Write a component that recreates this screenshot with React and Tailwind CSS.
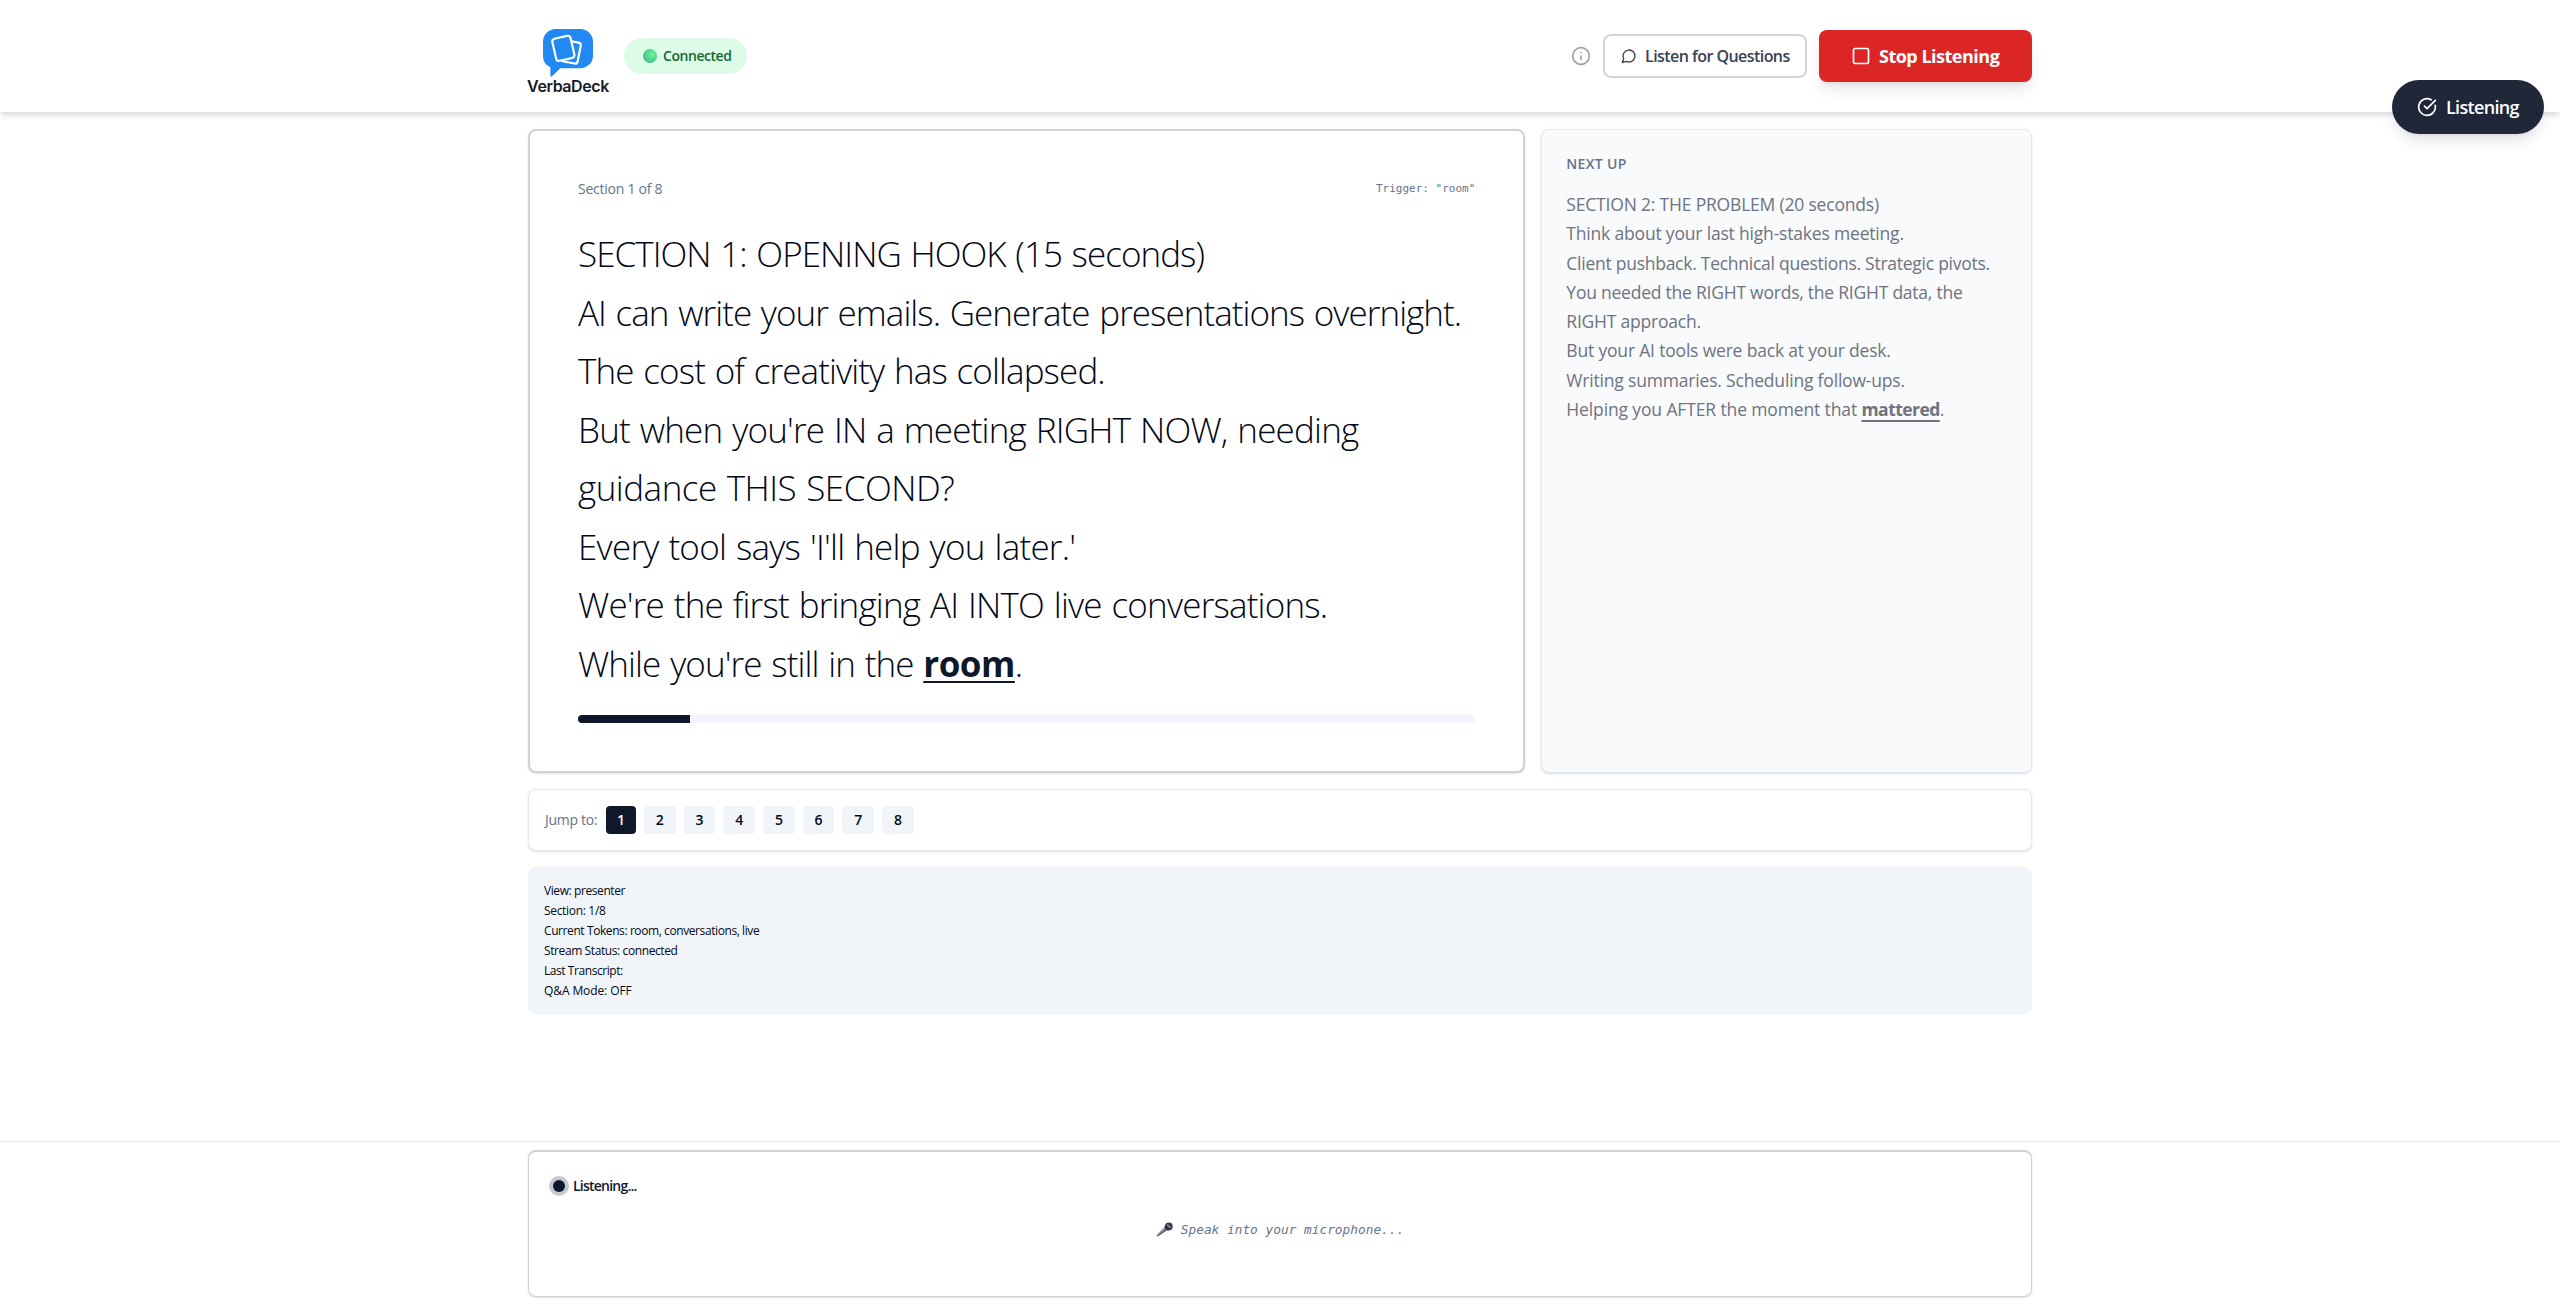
import React from "react";
import { Info, Square, CircleCheckBig } from "lucide-react";

const scriptLines = [
  { text: "SECTION 1: OPENING HOOK (15 seconds)", track: "tracking-[-0.95px]" },
  { text: "AI can write your emails. Generate presentations overnight.", track: "tracking-[-0.95px]" },
  { text: "The cost of creativity has collapsed.", track: "tracking-[-0.88px]" },
  { text: "But when you're IN a meeting RIGHT NOW, needing", track: "tracking-[-0.8px]" },
  { text: "guidance THIS SECOND?", track: "tracking-[-0.5px]" },
  { text: "Every tool says 'I'll help you later.'", track: "tracking-[-0.75px]" },
  { text: "We're the first bringing AI INTO live conversations.", track: "tracking-[-0.8px]" },
];

const nextLines = [
  { text: "SECTION 2: THE PROBLEM (20 seconds)", track: "tracking-[-0.19px]" },
  { text: "Think about your last high-stakes meeting.", track: "tracking-[-0.185px]" },
  { text: "Client pushback. Technical questions. Strategic pivots.", track: "tracking-[-0.26px]" },
  { text: "You needed the RIGHT words, the RIGHT data, the", track: "tracking-[-0.23px]" },
  { text: "RIGHT approach.", track: "tracking-[-0.22px]" },
  { text: "But your AI tools were back at your desk.", track: "tracking-[-0.185px]" },
  { text: "Writing summaries. Scheduling follow-ups.", track: "tracking-[-0.185px]" },
];

const debugLines = [
  { text: "View: presenter", track: "tracking-[-0.41px]" },
  { text: "Section: 1/8", track: "tracking-[-0.32px]" },
  { text: "Current Tokens: room, conversations, live", track: "tracking-[-0.41px]" },
  { text: "Stream Status: connected", track: "tracking-[-0.4px]" },
  { text: "Last Transcript:", track: "tracking-[-0.44px]" },
  { text: "Q&A Mode: OFF", track: "tracking-[-0.1px]" },
];

function Logo() {
  return (
    <div className="flex h-20 w-20 flex-col items-center pt-[13px]">
      <svg width="50" height="48" viewBox="99 56 150 144" className="shrink-0">
        <path
          d="M137 56H211A38 38 0 0 1 249 94V136A38 38 0 0 1 211 174H151L126 198Q121 201 121 195V171A38 38 0 0 1 99 136V94A38 38 0 0 1 137 56Z"
          fill="#2389f2"
        />
        <g stroke="#fff" strokeWidth="6.5" fill="#2389f2">
          <rect x="158" y="93" width="50" height="64" rx="8" transform="rotate(11 183 125)" />
          <rect x="132" y="80" width="56" height="68" rx="9" transform="rotate(-13 160 114)" />
        </g>
      </svg>
      <span className="whitespace-nowrap font-['Inter'] text-[16px] leading-[18px] font-semibold tracking-[-0.42px] text-[#161b26]">
        VerbaDeck
      </span>
    </div>
  );
}

function ChatIcon() {
  return (
    <svg className="h-4 w-4 shrink-0" viewBox="0 0 24 24" fill="none" stroke="currentColor" strokeWidth="2" strokeLinecap="round" strokeLinejoin="round">
      <path d="M7.9 20A9 9 0 1 0 4 16.1L2 22Z" />
    </svg>
  );
}

function MicEmoji() {
  return (
    <svg className="mr-2 h-[17px] w-[17px] shrink-0" viewBox="0 0 17 17">
      <path d="M0.5 13.2L9 4.6L12.2 7.6L1.6 14.4Z" fill="#9b8f96" />
      <path d="M1 13.8L10.6 6.2L12.2 7.6L1.6 14.4Z" fill="#6b5f6d" />
      <circle cx="12.8" cy="4.4" r="3.9" fill="#423a52" />
      <path d="M9 4.2L12.8 8" stroke="#3a2348" strokeWidth="1.8" />
      <path d="M11.2 2.6L14.4 5.8" stroke="#a9a4b5" strokeWidth="1.1" />
    </svg>
  );
}

function Header() {
  return (
    <header className="relative flex h-[113px] justify-center border-b border-slate-200 bg-white shadow-md">
      <div className="flex h-28 w-[1504px] items-center justify-between">
        <div className="flex items-center gap-4">
          <Logo />
          <div className="flex h-9 w-[123px] items-center rounded-full bg-[#dcfce7] pl-[19px]">
            <span className="h-[14px] w-[14px] rounded-full bg-[radial-gradient(circle_at_65%_40%,#6ff0a0_0%,#52d68c_45%,#4a9f85_100%)]" />
            <span className="ml-[6px] text-sm font-semibold tracking-[-0.45px] text-[#166534]">Connected</span>
          </div>
        </div>
        <div className="flex items-center gap-3">
          <Info className="h-5 w-5 text-[#9ca3af]" />
          <button className="flex h-11 w-[204px] items-center gap-2 whitespace-nowrap rounded-lg border-2 border-[#d1d5db] bg-white pl-4 text-base font-semibold tracking-[-0.55px] text-[#374151]">
            <ChatIcon />
            Listen for Questions
          </button>
          <button className="flex h-[52px] w-[213px] items-center gap-2 whitespace-nowrap rounded-lg bg-[#dc2626] pl-8 text-lg font-bold tracking-[-0.5px] text-white shadow-lg">
            <Square className="h-5 w-5" />
            Stop Listening
          </button>
        </div>
      </div>
      <div className="absolute top-20 right-4 z-10 flex h-[54px] w-[152px] items-center gap-[9px] rounded-full bg-slate-900 pl-[25px] text-lg font-semibold tracking-[-0.68px] text-white opacity-[0.93] shadow-lg">
        <CircleCheckBig className="h-5 w-5" />
        Listening
      </div>
    </header>
  );
}

function PresenterCard() {
  return (
    <section className="col-span-2 flex h-[644px] flex-col rounded-lg border-2 border-[#cfd1d4] bg-white p-12 shadow-sm">
      <div className="mb-[26px] flex h-5 items-center justify-between text-[#64748b]">
        <span className="text-sm tracking-[-0.25px]">Section 1 of 8</span>
        <span className="font-['DejaVu_Sans_Mono',monospace] text-[11px]">Trigger: "room"</span>
      </div>
      <div className="h-[466px] text-[35px] leading-[58.5px] font-light whitespace-nowrap text-[#020817] [word-spacing:1.5px]">
        {scriptLines.map((l) => (
          <div key={l.text} className={l.track}>{l.text}</div>
        ))}
        <div className="tracking-[-0.9px]">
          While you're still in the{" "}
          <span className="font-bold tracking-[-0.5px] text-[#0f172a] underline decoration-2 underline-offset-4 [text-decoration-skip-ink:none]">room</span>.
        </div>
      </div>
      <div className="mt-6 h-2 overflow-hidden rounded-full bg-[#f1f5f9]">
        <div className="h-2 w-1/8 bg-[#0f172a]" />
      </div>
    </section>
  );
}

function NextCard() {
  return (
    <section className="h-[644px] rounded-lg border border-[#e2e8f0] bg-[#f9fafc] p-6 shadow-sm">
      <h2 className="mb-4 text-sm font-semibold tracking-[0.31px] text-[#64748b]">NEXT UP</h2>
      <div className="text-[17.5px] leading-[29.25px] whitespace-nowrap text-[#6e737f]">
        {nextLines.map((l) => (
          <div key={l.text} className={l.track}>{l.text}</div>
        ))}
        <div className="tracking-[-0.13px]">
          Helping you AFTER the moment that{" "}
          <span className="font-bold tracking-[-0.54px] underline decoration-2 underline-offset-4">mattered</span>.
        </div>
      </div>
    </section>
  );
}

function JumpBar() {
  return (
    <section className="flex h-[62px] items-center rounded-lg border border-[#e2e8f0] bg-white px-4 shadow-sm">
      <span className="w-[61px] text-sm tracking-[-0.3px] text-[#64748b]">Jump to:</span>
      <div className="flex gap-2 text-sm font-semibold">
        <button className="h-7 w-[30px] rounded bg-[#0f172a] text-[#f8fafc]">1</button>
        {[2, 3, 4, 5, 6, 7, 8].map((n) => (
          <button key={n} className="h-7 w-[31.7px] rounded bg-[#f1f5f9] text-[#020817]">{n}</button>
        ))}
      </div>
    </section>
  );
}

export default function App() {
  return (
    <div className="flex h-[1305px] flex-col bg-white font-['Open_Sans',sans-serif] text-[#020817]">
      <Header />
      <main className="mx-auto flex w-[1504px] grow flex-col gap-4 pt-4">
        <div className="grid grid-cols-3 gap-4">
          <PresenterCard />
          <NextCard />
        </div>
        <JumpBar />
        <section className="flex h-[148px] flex-col gap-1 rounded-lg bg-[#f1f5f9] p-4 text-xs">
          {debugLines.map((l) => (
            <div key={l.text} className={l.track}>{l.text}</div>
          ))}
        </section>
      </main>
      <footer className="flex h-[164px] justify-center border-t border-[#e2e8f0] bg-white py-2">
        <div className="flex h-[147px] w-[1504px] flex-col rounded-lg border border-t-2 border-[#cfd1d4] bg-white px-5 pt-6 shadow-sm">
          <div className="flex h-5 items-center gap-[4px]">
            <span className="flex h-5 w-5 items-center justify-center rounded-full bg-[#c7c9cf]">
              <span className="h-3 w-3 rounded-full bg-[#0f172a]" />
            </span>
            <span className="text-sm font-semibold tracking-[-0.77px] text-[#0f172a]">Listening...</span>
          </div>
          <div className="mt-6 flex h-5 items-center justify-center text-[#64748b]">
            <MicEmoji />
            <span className="font-['DejaVu_Sans_Mono',monospace] text-[12.8px] italic">Speak into your microphone...</span>
          </div>
        </div>
      </footer>
    </div>
  );
}
